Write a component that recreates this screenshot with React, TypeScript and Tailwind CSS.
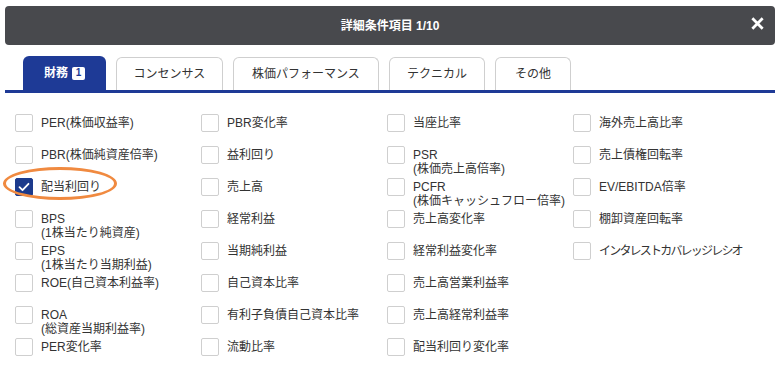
import { useState } from "react"

const FONT = { fontFamily: '"Liberation Sans", "Noto Sans CJK JP", sans-serif' }

const TABS = [
  { label: "財務", w: "w-[83px]", badge: "1" },
  { label: "コンセンサス", w: "w-[107px]" },
  { label: "株価パフォーマンス", w: "w-[146px]" },
  { label: "テクニカル", w: "w-[96px]" },
  { label: "その他", w: "w-[76px]" },
]

// rows x 4 columns; null = empty cell
const ITEMS: (string[] | null)[] = [
  ["PER(株価収益率)"], ["PBR変化率"], ["当座比率"], ["海外売上高比率"],
  ["PBR(株価純資産倍率)"], ["益利回り"], ["PSR", "(株価売上高倍率)"], ["売上債権回転率"],
  ["配当利回り"], ["売上高"], ["PCFR", "(株価キャッシュフロー倍率)"], ["EV/EBITDA倍率"],
  ["BPS", "(1株当たり純資産)"], ["経常利益"], ["売上高変化率"], ["棚卸資産回転率"],
  ["EPS", "(1株当たり当期利益)"], ["当期純利益"], ["経常利益変化率"], ["インタレストカバレッジレシオ"],
  ["ROE(自己資本利益率)"], ["自己資本比率"], ["売上高営業利益率"], null,
  ["ROA", "(総資産当期利益率)"], ["有利子負債自己資本比率"], ["売上高経常利益率"], null,
  ["PER変化率"], ["流動比率"], ["配当利回り変化率"], null,
]

function Checkbox({ checked }: { checked: boolean }) {
  return (
    <span
      className={`flex h-[18px] w-[18px] shrink-0 items-center justify-center rounded-[2px] border ${
        checked ? "border-[#1c3a8c] bg-[#1c3a8c]" : "border-[#cfcfcf] bg-white"
      }`}
    >
      {checked && (
        <svg width="12" height="10" viewBox="0 0 12 10" fill="none">
          <path d="M1.5 5.2 4.5 8.2 10.5 1.8" stroke="white" strokeWidth="1.8" strokeLinecap="round" strokeLinejoin="round" />
        </svg>
      )}
    </span>
  )
}

export default function App() {
  const [checked, setChecked] = useState<Record<number, boolean>>({ 8: true })

  return (
    <div className="h-[377px] w-[780px] overflow-hidden bg-white text-[#333]" style={FONT}>
      <div className="px-[5px] pt-[6px]">
        <div className="relative flex h-[39px] items-center justify-center rounded-[4px] bg-[#48494d]">
          <span className="text-[12px] font-bold text-white">詳細条件項目 1/10</span>
          <button type="button" className="absolute right-[11px] top-[11px] text-white">
            <svg width="13" height="13" viewBox="0 0 14 14">
              <path d="M2.5 2.5 11.5 11.5M11.5 2.5 2.5 11.5" stroke="white" strokeWidth="3" strokeLinecap="square" />
            </svg>
          </button>
        </div>

        <div className="mt-[11px] flex items-end gap-[10px] border-b-[3px] border-[#1e3a96] pl-[18px]">
          {TABS.map((t, i) =>
            i === 0 ? (
              <div
                key={t.label}
                className={`${t.w} flex h-[34px] items-center justify-center gap-[4px] rounded-t-[6px] bg-[#1e3a96] text-[12px] font-bold text-white`}
              >
                {t.label}
                <span className="flex h-[13px] w-[13px] items-center justify-center rounded-[2px] bg-white text-[10px] font-bold leading-none text-[#1e3a96]">
                  {t.badge}
                </span>
              </div>
            ) : (
              <div
                key={t.label}
                className={`${t.w} flex h-[33px] items-center justify-center rounded-t-[6px] border border-b-0 border-[#cfcfcf] bg-white text-[12px] text-[#333]`}
              >
                {t.label}
              </div>
            )
          )}
        </div>
      </div>

      <div className="relative grid grid-cols-[186px_186px_186px_186px] auto-rows-[32px] pl-[15px] pt-[21px]">
        {ITEMS.map((lines, i) =>
          lines ? (
            <label
              key={i}
              className="flex cursor-pointer items-start gap-[8px]"
              onClick={() => setChecked((c) => ({ ...c, [i]: !c[i] }))}
            >
              <Checkbox checked={!!checked[i]} />
              <span className={`pt-[2px] text-[12px] leading-[14px] ${i === 19 ? "tracking-[-1.8px]" : ""}`}>
                {lines.map((l) => (
                  <span key={l} className="block whitespace-nowrap">
                    {l}
                  </span>
                ))}
              </span>
            </label>
          ) : (
            <div key={i} />
          )
        )}
        <span className="pointer-events-none absolute left-[3px] top-[74px] h-[33px] w-[114px] rounded-[50%] border-[3px] border-[#f08a40]" />
      </div>
    </div>
  )
}
